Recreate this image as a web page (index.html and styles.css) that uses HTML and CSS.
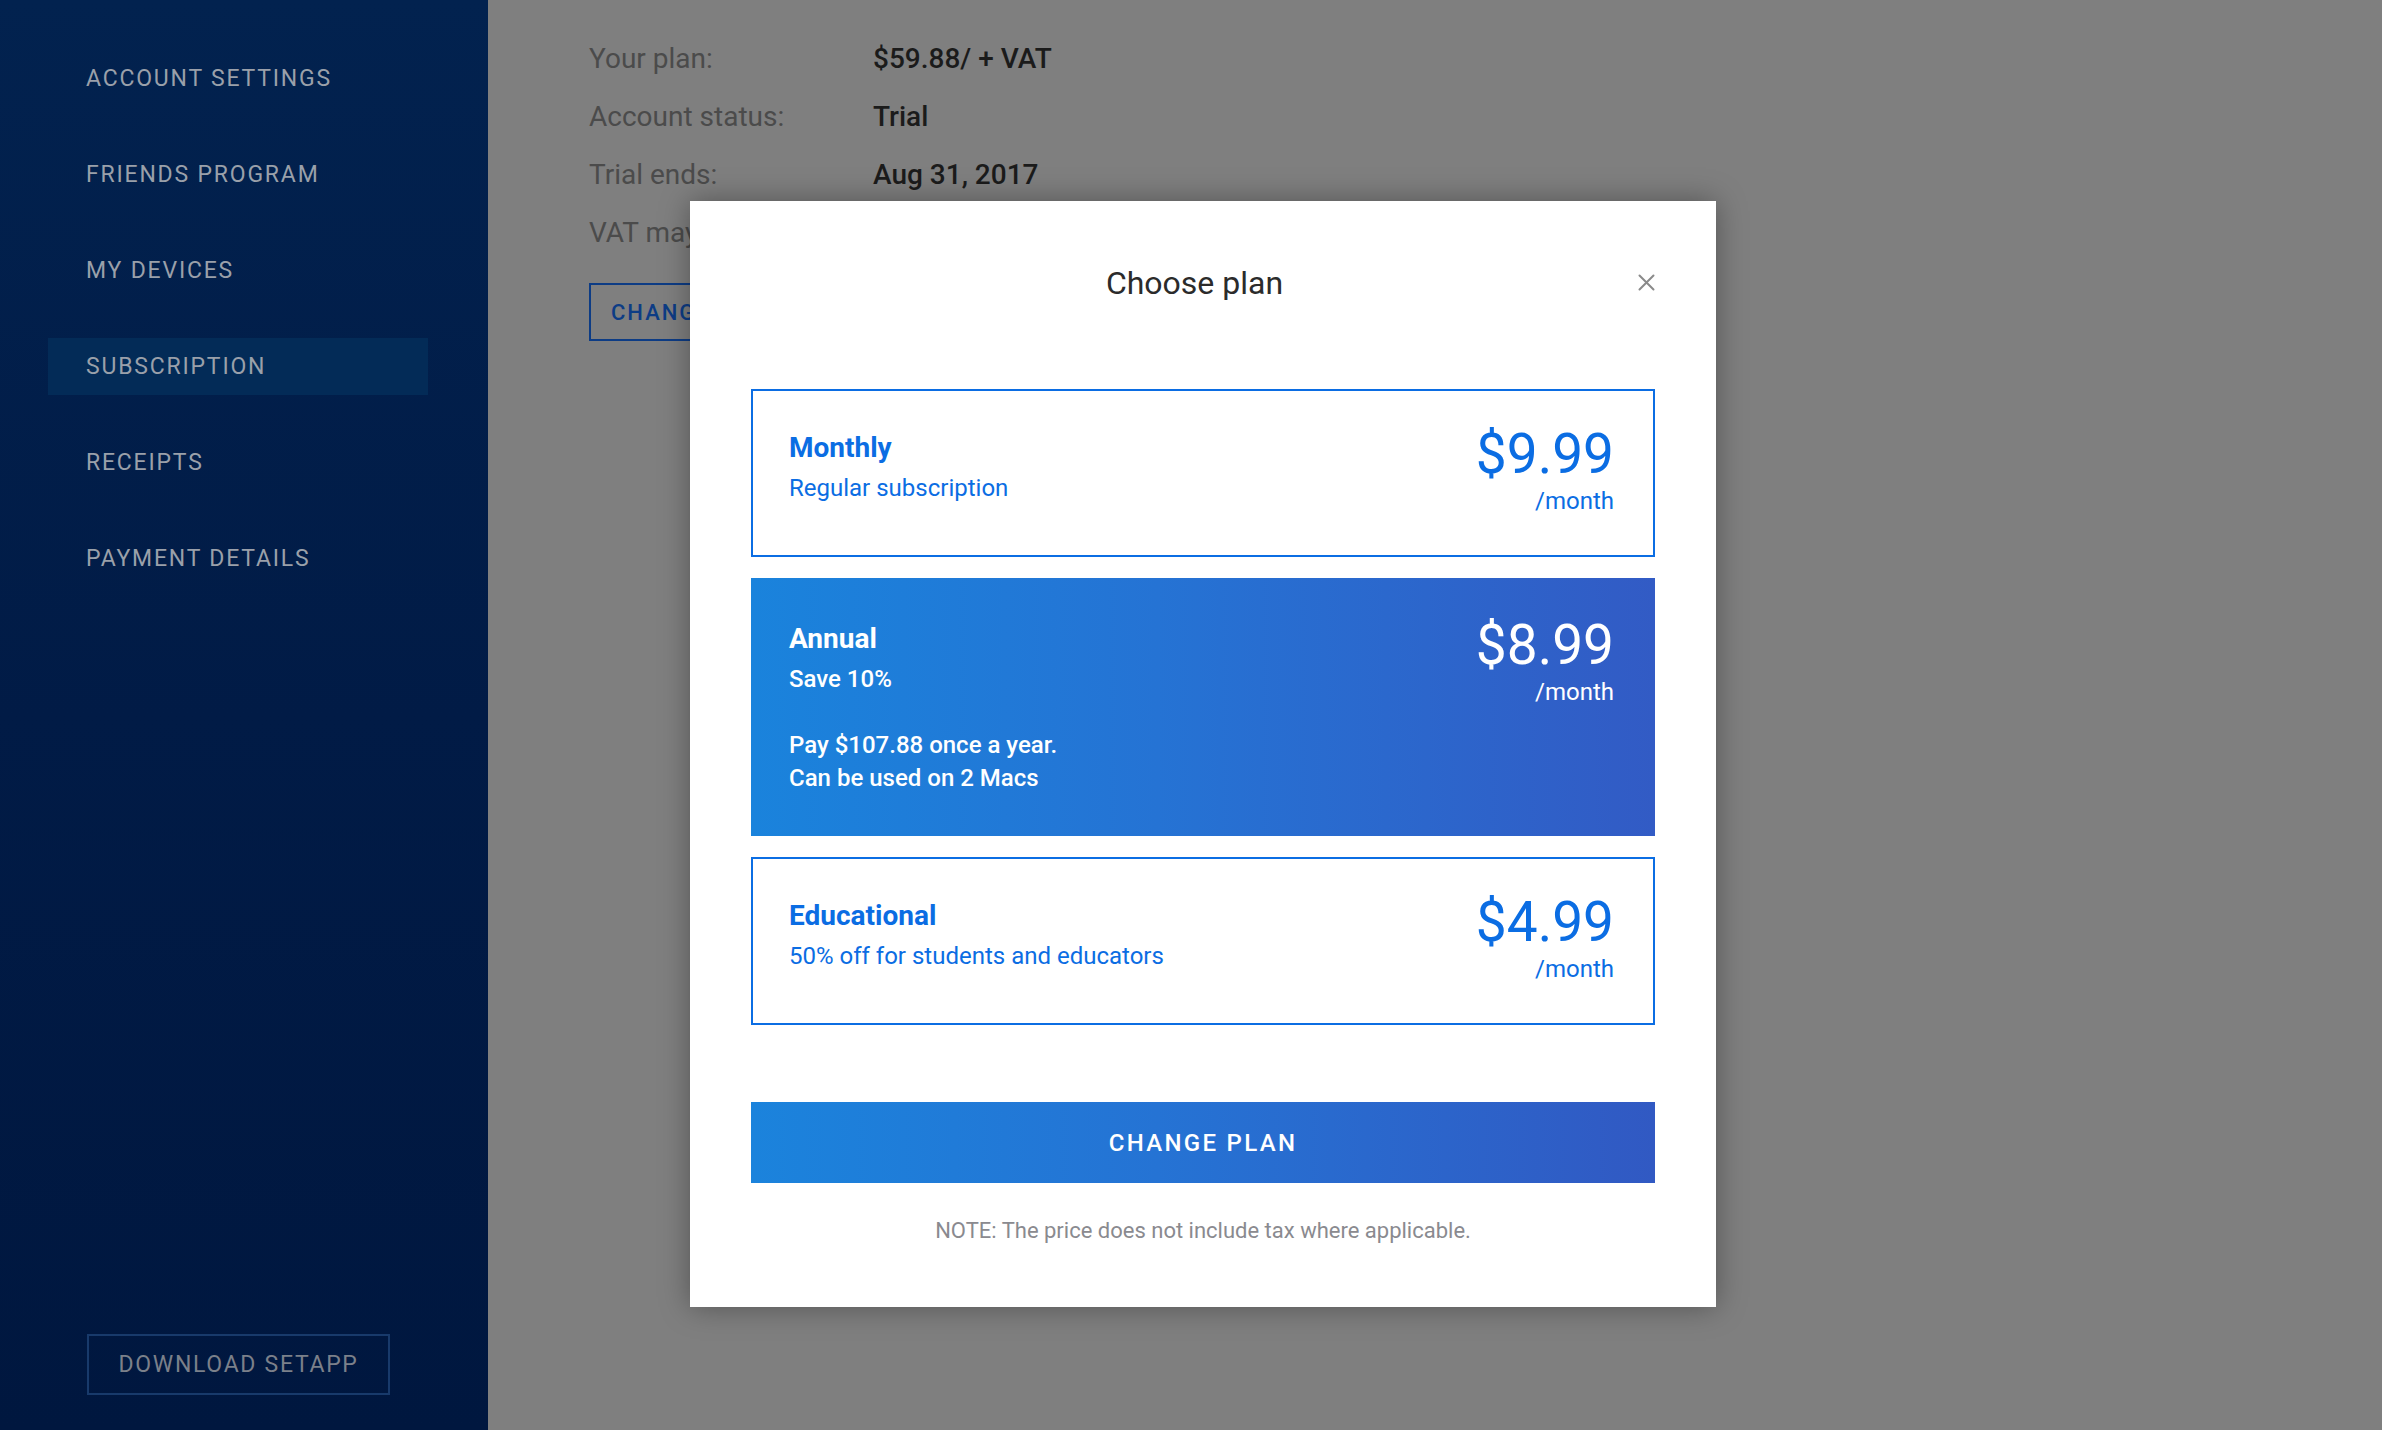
FILE: index.html
```html
<!DOCTYPE html>
<html lang="en">
<head>
<meta charset="utf-8">
<title>Subscription – Choose plan</title>
<link rel="stylesheet" href="styles.css">
</head>
<body>
<div class="app">
  <aside class="sidebar">
    <nav class="nav">
      <a class="nav-item">ACCOUNT SETTINGS</a>
      <a class="nav-item">FRIENDS PROGRAM</a>
      <a class="nav-item">MY DEVICES</a>
      <a class="nav-item active">SUBSCRIPTION</a>
      <a class="nav-item">RECEIPTS</a>
      <a class="nav-item">PAYMENT DETAILS</a>
    </nav>
    <a class="download">DOWNLOAD SETAPP</a>
  </aside>
  <main class="main">
    <div class="info">
      <div class="label">Your plan:</div><div class="value">$59.88/ + VAT</div>
      <div class="label">Account status:</div><div class="value">Trial</div>
      <div class="label">Trial ends:</div><div class="value">Aug 31, 2017</div>
      <div class="label wide">VAT may apply depending on your country of residence.</div>
    </div>
    <button class="outline-btn">CHANGE PLAN</button>
  </main>
</div>

<div class="modal">
  <div class="modal-head">
    <h2 class="modal-title">Choose plan</h2>
    <button class="close" aria-label="Close">
      <svg width="17" height="17" viewBox="0 0 17 17"><path d="M1.5 1.5 L15.5 15.5 M15.5 1.5 L1.5 15.5" stroke="#8a8a8a" stroke-width="2" fill="none" stroke-linecap="round"/></svg>
    </button>
  </div>
  <div class="plans">
    <div class="plan">
      <div class="plan-info">
        <div class="plan-name">Monthly</div>
        <div class="plan-sub">Regular subscription</div>
      </div>
      <div class="plan-price">
        <div class="amount">$9.99</div>
        <div class="per">/month</div>
      </div>
    </div>
    <div class="plan selected">
      <div class="plan-info">
        <div class="plan-name">Annual</div>
        <div class="plan-sub">Save 10%</div>
        <div class="plan-desc">Pay $107.88 once a year.<br>Can be used on 2 Macs</div>
      </div>
      <div class="plan-price">
        <div class="amount">$8.99</div>
        <div class="per">/month</div>
      </div>
    </div>
    <div class="plan">
      <div class="plan-info">
        <div class="plan-name">Educational</div>
        <div class="plan-sub">50% off for students and educators</div>
      </div>
      <div class="plan-price">
        <div class="amount">$4.99</div>
        <div class="per">/month</div>
      </div>
    </div>
  </div>
  <button class="cta">CHANGE PLAN</button>
  <p class="note">NOTE: The price does not include tax where applicable.</p>
</div>
</body>
</html>
```

FILE: styles.css
```css
* { box-sizing: border-box; }
html, body {
  margin: 0;
  padding: 0;
  width: 2382px;
  height: 1430px;
  overflow: hidden;
  font-family: Roboto, "Liberation Sans", sans-serif;
}
.app {
  display: flex;
  width: 2382px;
  height: 1430px;
}
.sidebar {
  width: 488px;
  flex: none;
  background: linear-gradient(180deg, #02224f 0%, #011b46 50%, #00173f 100%);
  display: flex;
  flex-direction: column;
  padding: 50px 0 35px;
}
.nav {
  display: flex;
  flex-direction: column;
  gap: 39px;
}
.nav-item {
  display: block;
  margin-left: 48px;
  width: 380px;
  height: 57px;
  line-height: 57px;
  padding-left: 38px;
  font-size: 23px;
  letter-spacing: 1.8px;
  color: #9aa0aa;
}
.nav-item.active {
  background: #032b57;
}
.download {
  margin-top: auto;
  margin-left: 87px;
  width: 303px;
  height: 61px;
  border: 2px solid #183a6b;
  display: flex;
  align-items: center;
  justify-content: center;
  font-size: 23px;
  letter-spacing: 1.7px;
  color: #7b808a;
}
.main {
  flex: 1;
  background: #7f7f7f;
  padding: 30px 0 0 101px;
}
.info {
  display: grid;
  grid-template-columns: 284px auto;
  justify-content: start;
}
.label, .value {
  font-size: 28px;
  line-height: 58px;
  white-space: nowrap;
}
.label { color: #4b4b4b; }
.label.wide { grid-column: 1 / 3; }
.value { color: #1b1b1b; font-weight: 500; }
.outline-btn {
  margin-top: 21px;
  height: 58px;
  width: 280px;
  padding: 0 0 0 20px;
  text-align: left;
  background: transparent;
  border: 2px solid #0d3c85;
  color: #0d3c85;
  font-family: inherit;
  font-size: 22px;
  font-weight: 500;
  letter-spacing: 2px;
}

/* modal */
.modal {
  position: absolute;
  left: 690px;
  top: 201px;
  width: 1026px;
  background: #fff;
  padding: 62px 61px 61px;
  box-shadow: 0 0 28px rgba(0, 0, 0, 0.35);
}
.modal-head {
  display: flex;
  align-items: center;
  height: 40px;
}
.modal-title {
  flex: 1;
  margin: 0;
  text-align: center;
  font-size: 32px;
  line-height: 40px;
  font-weight: 400;
  color: #2b2b2b;
}
.close {
  width: 17px;
  height: 17px;
  margin-top: -2px;
  padding: 0;
  border: 0;
  background: none;
  display: flex;
}
.plans {
  margin-top: 86px;
  display: flex;
  flex-direction: column;
  gap: 21px;
}
.plan {
  display: flex;
  justify-content: space-between;
  align-items: flex-start;
  border: 2px solid #0b6de3;
  padding: 39px 39px 39px 36px;
  color: #0b6de3;
}
.plan.selected {
  border-color: transparent;
  background: linear-gradient(90deg, #1a83dc 0%, #2573d4 45%, #325bc5 100%);
  background-origin: border-box;
  color: #fff;
  padding-top: 41px;
}
.plan-name {
  font-size: 28px;
  line-height: 36px;
  font-weight: 700;
}
.plan-sub {
  margin-top: 6px;
  font-size: 24px;
  line-height: 32px;
}
.plan.selected .plan-sub,
.plan.selected .plan-desc {
  font-weight: 500;
}
.plan-desc {
  margin-top: 34px;
  font-size: 24px;
  line-height: 33px;
}
.plan-price {
  text-align: right;
}
.amount {
  font-size: 55px;
  line-height: 49px;
}
.per {
  margin-top: 7px;
  font-size: 24px;
  line-height: 30px;
}
.cta {
  display: block;
  width: 100%;
  margin-top: 77px;
  height: 81px;
  border: 0;
  background: linear-gradient(90deg, #1b83dc 0%, #2573d4 45%, #3159c3 100%);
  color: #fff;
  font-family: inherit;
  font-size: 24px;
  font-weight: 500;
  letter-spacing: 2.3px;
}
.note {
  margin: 33px 0 0;
  text-align: center;
  font-size: 22px;
  line-height: 30px;
  color: #8a8a8f;
}
```
